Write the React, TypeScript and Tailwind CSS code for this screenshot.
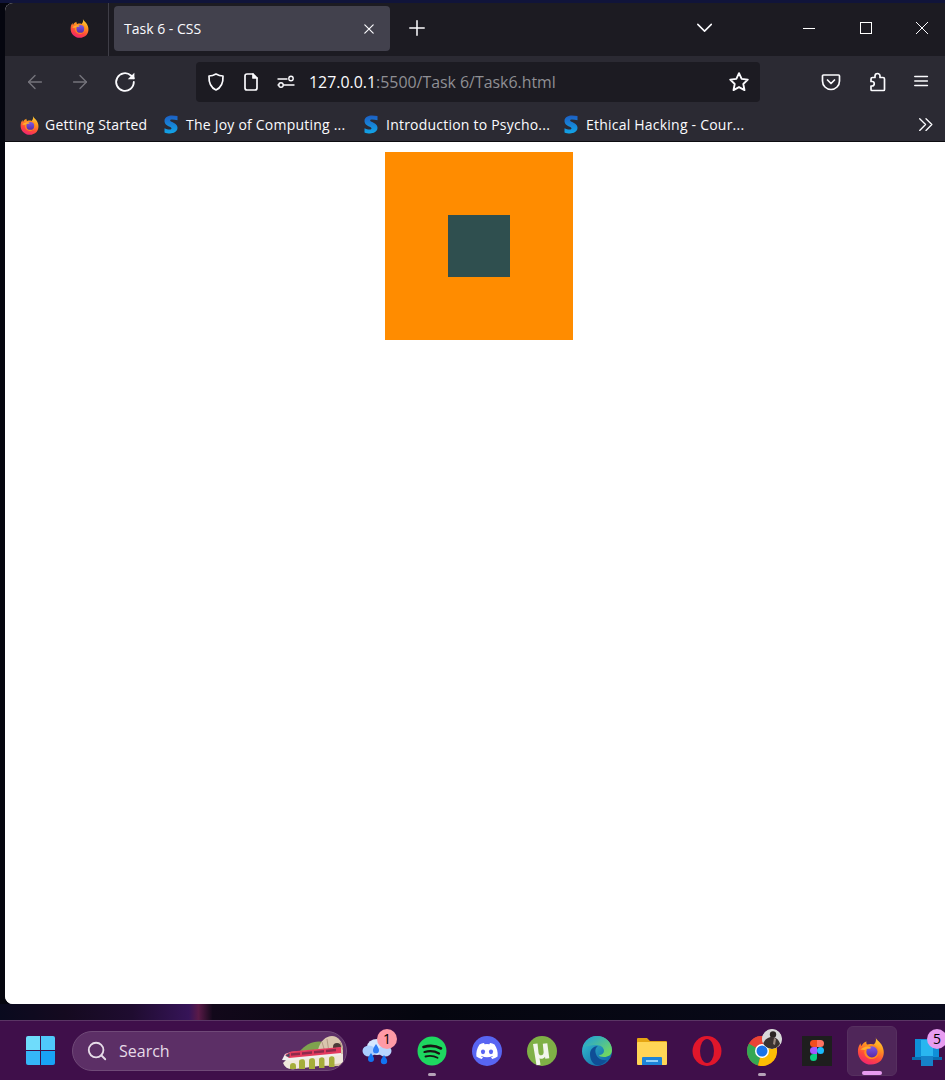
import { useId } from "react";
import { ArrowLeft, ArrowRight, Search } from "lucide-react";

function FirefoxLogo({ size = 20 }: { size?: number }) {
  const id = useId();
  return (
    <svg width={size} height={size} viewBox="0 0 32 32">
      <defs>
        <linearGradient id={`${id}b`} x1="0.75" y1="0" x2="0.35" y2="1">
          <stop offset="0" stopColor="#ffd23a" />
          <stop offset="0.35" stopColor="#ff9a1f" />
          <stop offset="0.7" stopColor="#ff4b3a" />
          <stop offset="1" stopColor="#f0246f" />
        </linearGradient>
        <linearGradient id={`${id}p`} x1="0.5" y1="0" x2="0.5" y2="1">
          <stop offset="0" stopColor="#7a5ae6" />
          <stop offset="1" stopColor="#5a2aa8" />
        </linearGradient>
      </defs>
      <path
        d="M20.500 1c.5 3 4.500 5 6.500 8.500 3.500 6 3.500 12.500-.5 17.500-3 3-7 4.500-11 4.500C8 31.500 1 25.500 1 17c0-3.500 1-6.500 3-9 0 1.500.3 2.500.8 3C6 8.500 8.500 6.500 10.500 6c-.5 1.500 0 3 1 3.500 2-1 5-1 7 0C21 7 21.500 4 20.500 1z"
        fill={`url(#${id}b)`}
      />
      <path d="M16 9.500c4.500 0 8 3.600 8 8.200S20.400 25.500 16 25.500s-8-3.500-8-7.800c0-1.800 1-3 2-4 1.500 1 4 1 5.500.3.800-.4.300-1.800-1.500-2 .6-1.500 1.300-2.500 2-2.500z" fill="#ff8a1f" />
      <circle cx="16.500" cy="17.500" r="6.200" fill={`url(#${id}p)`} />
      <path d="M3.500 15c2.500-1.800 5.500-3.500 8.500-3.300 1.500.1 3 .6 3.500 1.500-1.500 1-3.500 1-5 .8-.5 1-1.500 1.500-2.500 1.500-1.500 0-3-.3-4.500-.5z" fill="#ffb02e" />
    </svg>
  );
}

function SwayamLogo() {
  const id = useId();
  return (
    <svg width="14" height="19" viewBox="0 0 14 19">
      <defs>
        <linearGradient id={id} x1="0" y1="0" x2="0" y2="1">
          <stop offset="0" stopColor="#1c5fc4" />
          <stop offset="1" stopColor="#12a5e8" />
        </linearGradient>
      </defs>
      <path
        d="M13.500 1v4.200C11 4.500 8.500 4.200 7 4.500 5.500 4.900 6 6 7.500 6.800c3.500 1.600 6 3 6 6 0 4-4 5.700-7.500 5.700-2 0-4-.3-5.500-1v-4.300c2 1 4.500 1.500 6 1.200 1.500-.4 1.300-1.500-.2-2.300C3 10.500.5 9.200.5 6 .5 2 4.500.5 8 .5c2 0 4 .2 5.500.5z"
        fill={`url(#${id})`}
      />
    </svg>
  );
}

function Line({ children, size = 20 }: { children: React.ReactNode; size?: number }) {
  return (
    <svg
      width={size}
      height={size}
      viewBox="0 0 20 20"
      fill="none"
      stroke="currentColor"
      strokeWidth="1.700"
      strokeLinecap="round"
      strokeLinejoin="round"
    >
      {children}
    </svg>
  );
}

function Bookmark({ icon, label, width }: { icon: React.ReactNode; label: string; width: string }) {
  return (
    <div className={`flex shrink-0 items-center gap-[5px] ${width}`}>
      <div className="flex w-[20px] justify-center">{icon}</div>
      <span className="whitespace-nowrap tracking-[0.22px]">{label}</span>
    </div>
  );
}

function TabBar() {
  return (
    <div className="flex h-[53px] shrink-0 bg-[#1c1b22] text-[#fbfbfe]">
      <div className="flex h-full w-[104px] shrink-0 items-center justify-end border-r border-[#3f3e47] pr-[18px] pb-[3px]">
        <FirefoxLogo size={20} />
      </div>
      <div className="ml-[5px] mt-[3px] flex h-[45px] w-[276px] items-center justify-between rounded-[4px] bg-[#42414d] pl-[10px] pr-[14px] text-[14px]">
        <span>Task 6 - CSS</span>
        <Line size={14}>
          <path d="M4 4l12 12M16 4L4 16" />
        </Line>
      </div>
      <div className="ml-[18px] flex h-full items-center pb-[3px]">
        <Line size={18}>
          <path d="M10 2v16M2 10h16" />
        </Line>
      </div>
      <div className="ml-[270px] flex h-full items-center pb-[3px]">
        <Line size={18}>
          <path d="M2 6l7.500 7.500L17 6" />
        </Line>
      </div>
      <div className="ml-[89px] flex h-full items-center pb-[3px]">
        <div className="h-px w-[12px] bg-white" />
      </div>
      <div className="ml-[45px] flex h-full items-center pb-[3px]">
        <div className="size-[12px] border border-white" />
      </div>
      <div className="ml-[43px] flex h-full items-center pb-[3px]">
        <svg width="14" height="14" viewBox="0 0 14 14" stroke="currentColor" strokeWidth="1">
          <path d="M1 1l12 12M13 1L1 13" />
        </svg>
      </div>
    </div>
  );
}

function Toolbar() {
  return (
    <div className="flex h-[52px] shrink-0 items-center bg-[#2b2a33] text-[#fbfbfe]">
      <div className="ml-[19px] flex w-[172px] shrink-0 items-center gap-[23px]">
        <ArrowLeft size={22} strokeWidth={1.500} className="text-[#75747c]" />
        <ArrowRight size={22} strokeWidth={1.500} className="text-[#75747c]" />
        <Line size={22}>
          <path d="M18 10a8 8 0 1 1-2.600-5.900L18 6.500" />
          <path d="M18.500 1.500V7.500h-6z" fill="currentColor" stroke="none" />
        </Line>
      </div>
      <div className="flex h-[40px] w-[564px] shrink-0 items-center rounded-[4px] bg-[#1c1b22] pl-[10px] pr-[10px]">
        <Line size={20}>
          <path d="M10 2c2.500 1.500 4.800 2 7 2 .3 6.500-1.500 11.500-7 14C4.500 15.500 2.700 10.500 3 4c2.200 0 4.500-.5 7-2z" />
        </Line>
        <div className="ml-[15px]">
          <Line size={20}>
            <path d="M4 4a2 2 0 0 1 2-2h6l4 4v10a2 2 0 0 1-2 2H6a2 2 0 0 1-2-2z" />
            <path d="M12 2v4h4" fill="currentColor" />
          </Line>
        </div>
        <div className="ml-[15px]">
          <Line size={20}>
            <path d="M2 7h9M2 13h16" strokeWidth="1.400" />
            <circle cx="15" cy="6.500" r="2.200" strokeWidth="1.400" />
            <circle cx="5" cy="13" r="2.200" strokeWidth="1.400" fill="#1c1b22" />
          </Line>
        </div>
        <span className="ml-[13px] mt-[2px] whitespace-nowrap text-[15.900px] text-[#fbfbfe]">
          127.0.0.1<span className="text-[#8f8f94]">:5500/Task 6/Task6.html</span>
        </span>
        <div className="ml-auto">
          <Line size={22}>
            <path d="M10 2l2.400 5.200 5.600.7-4.100 3.900 1.100 5.600-5-2.800-5 2.800 1.100-5.600L2 7.900l5.600-.7z" />
          </Line>
        </div>
      </div>
      <div className="ml-[61px] flex items-center gap-[26px]">
        <Line size={20}>
          <path d="M2.500 3h15a1 1 0 0 1 1 1v5a8.500 8.500 0 0 1-17 0V4a1 1 0 0 1 1-1z" />
          <path d="M6.500 8l3.500 3.500L13.500 8" />
        </Line>
        <Line size={20}>
          <path d="M8 4.500V4a2.500 2.500 0 0 1 5 0v1.500h3a1.500 1.500 0 0 1 1.500 1.500v10.500a1 1 0 0 1-1 1H5a1 1 0 0 1-1-1v-3.500h1a2 2 0 0 0 0-4.500H4V7a1.500 1.500 0 0 1 1.500-1.500H8z" />
        </Line>
        <Line size={18}>
          <path d="M2 4h14M2 9h14M2 14h14" />
        </Line>
      </div>
    </div>
  );
}

function BookmarksBar() {
  return (
    <div className="flex h-[34px] shrink-0 items-center border-b border-[#0c0c10] bg-[#2b2a33] pl-[15px] text-[14px] text-[#fbfbfe]">
      <Bookmark icon={<FirefoxLogo size={20} />} label="Getting Started" width="w-[141px]" />
      <Bookmark icon={<SwayamLogo />} label="The Joy of Computing ..." width="w-[200px]" />
      <Bookmark icon={<SwayamLogo />} label="Introduction to Psycho..." width="w-[200px]" />
      <Bookmark icon={<SwayamLogo />} label="Ethical Hacking - Cour..." width="w-[356px]" />
      <Line size={18}>
        <path d="M3 3l6.500 6.500L3 16M10 3l6.500 6.500L10 16" strokeWidth="1.500" />
      </Line>
    </div>
  );
}

function TrainScene() {
  return (
    <svg width="62" height="34" viewBox="0 0 62 34">
      <path d="M18 16C25 8 33 4 43 6v12z" fill="#7ea34e" />
      <path d="M37 20V14C39 5 45 0 51 0c6 0 10.500 6 11 12v18H37z" fill="#d9c6ae" />
      <path d="M41 6l3 10M46 3l1.500 10M62 14l-3-8" stroke="#b39c84" strokeWidth="1" fill="none" />
      <path d="M52 15v-4a4 4 0 0 1 8 0v3z" fill="#4b3a38" />
      <path d="M2 27l4-4 56-5v9L14 33c-6 1-10-1-12-6z" fill="#f0e8dc" />
      <path d="M9 33V30a3 3 0 0 1 6 0v3zM18 33v-7a3 3 0 0 1 6 0v7zM28 33v-8a3 3 0 0 1 6 0v8zM38 32v-8a2.700 2.700 0 0 1 5.500 0v8zM48 31v-8a2.700 2.700 0 0 1 5.500 0v8z" fill="#a5ad3a" />
      <path d="M1 24l3-6 6-2 50-4.500V19L9 24.500z" fill="#f0f0ee" />
      <path d="M4 19l6-3.500 50-4.500v6L8 22z" fill="#e43a5e" />
      <path d="M10 17.300l9-.9v2.500l-9 .9zM21 16.200l10-1v2.500l-10 1zM33 15l10-1v2.500l-10 1zM45 13.800l10-1v2.500l-10 1z" fill="#8e2a4c" />
      <path d="M4.500 20l4-3v4z" fill="#3f4a66" />
    </svg>
  );
}

function WeatherIcon() {
  return (
    <svg width="30" height="30" viewBox="0 0 30 30">
      <ellipse cx="15" cy="11" rx="10" ry="8" fill="#d6e8ff" />
      <ellipse cx="7" cy="15" rx="6.500" ry="5.500" fill="#a9ceff" />
      <ellipse cx="23" cy="15" rx="6.500" ry="5.500" fill="#b7d6ff" />
      <path d="M14 8c2 3 3 4.500 3 6.500a3 3 0 0 1-6 0c0-2 1-3.500 3-6.500z" fill="#2f7df6" />
      <path d="M9 17c1.500 2.500 3 4 3 6a3 3 0 0 1-6 0c0-2 1.500-3.500 3-6z" fill="#1274f2" />
      <path d="M22 19c1.500 2.500 3.200 4 3.200 6a3.200 3.200 0 0 1-6.400 0c0-2 1.700-3.500 3.200-6z" fill="#1274f2" />
    </svg>
  );
}

function SpotifyIcon() {
  return (
    <svg width="30" height="30" viewBox="0 0 30 30">
      <circle cx="15" cy="15" r="14.500" fill="#1ed760" />
      <g fill="none" stroke="#191414" strokeLinecap="round">
        <path d="M6.500 11c6-1.700 12.500-1.200 17.500 1.500" strokeWidth="2.600" />
        <path d="M7.500 16c5-1.300 10.500-.8 14.500 1.500" strokeWidth="2.200" />
        <path d="M8.500 20.500c4.200-1 8.500-.6 12 1.300" strokeWidth="1.800" />
      </g>
    </svg>
  );
}

function DiscordIcon() {
  return (
    <svg width="30" height="30" viewBox="0 0 30 30">
      <circle cx="15" cy="15" r="15" fill="#5865f2" />
      <path
        d="M22.500 8.500a17 17 0 0 0-4.500-1.400l-.6 1.200a15 15 0 0 0-4.800 0L12 7.100a17 17 0 0 0-4.500 1.400C4.800 12.500 4 16.500 4.400 20.400a17 17 0 0 0 5.400 2.700l1.200-1.800-1.900-.9.400-.4c3.700 1.700 7.300 1.700 11 0l.4.400-1.900.9 1.200 1.800a17 17 0 0 0 5.400-2.700c.5-4.500-.7-8.500-3.100-11.900z"
        fill="#fff"
      />
      <ellipse cx="11" cy="15.800" rx="2.100" ry="2.400" fill="#5865f2" />
      <ellipse cx="19" cy="15.800" rx="2.100" ry="2.400" fill="#5865f2" />
    </svg>
  );
}

function UTorrentIcon() {
  return (
    <svg width="30" height="30" viewBox="0 0 30 30">
      <circle cx="15" cy="15" r="15" fill="#7fb046" />
      <path d="M6 8l4.500-.5 1 9c.2 2 1.200 3 2.700 2.800 1.800-.2 2.600-1.500 2.400-3.500l-.8-8 4.500-.5 2 15-4 .5-.3-2c-1.500 2-3.500 2.500-5.500 1.500l1 6.500-4 .5z" fill="#f2f5ec" />
    </svg>
  );
}

function EdgeIcon() {
  return (
    <svg width="30" height="30" viewBox="0 0 30 30">
      <defs>
        <linearGradient id="edgeA" x1="0" y1="0" x2="1" y2="1">
          <stop offset="0" stopColor="#37c6d0" />
          <stop offset="1" stopColor="#0c59a4" />
        </linearGradient>
        <linearGradient id="edgeB" x1="0" y1="0" x2="1" y2="1">
          <stop offset="0" stopColor="#1b9de2" />
          <stop offset="1" stopColor="#7ee04f" />
        </linearGradient>
      </defs>
      <circle cx="15" cy="15" r="15" fill="url(#edgeA)" />
      <path d="M1 11C3 4 9 0 15 0c8 0 15 6 15 14 0 5-4 7-8 7-3 0-5-1-5-2 3 0 5-2 5-4 0-4-4-6-8-6-5 0-9 1-13 2z" fill="url(#edgeB)" />
      <path d="M8 18c0-5 4-8 8-8-3 2-3 5-2 8 1 4 6 7 11 6-3 4-7 6-11 5-4-2-6-6-6-11z" fill="#0f4e96" />
    </svg>
  );
}

function FolderIcon() {
  return (
    <svg width="30" height="28" viewBox="0 0 30 28">
      <path d="M0 2a1 1 0 0 1 1-1h9l3 3h16a1 1 0 0 1 1 1v3H0z" fill="#e6a512" />
      <rect y="5" width="30" height="23" rx="1" fill="#ffd556" />
      <path d="M5 21a1 1 0 0 1 1-1h18a1 1 0 0 1 1 1v7H5z" fill="#1c84d8" />
      <rect x="9" y="23" width="12" height="2" fill="#8fd0f7" />
    </svg>
  );
}

function OperaIcon() {
  return (
    <svg width="30" height="30" viewBox="0 0 30 30">
      <ellipse cx="15" cy="15" rx="14.500" ry="15" fill="#e0162b" />
      <ellipse cx="15" cy="15" rx="7" ry="12" fill="#3f0f4a" />
    </svg>
  );
}

function ChromeIcon() {
  return (
    <svg width="30" height="30" viewBox="0 0 30 30">
      <circle cx="15" cy="15" r="15" fill="#ea4335" />
      <path d="M15 15L2 7.500A15 15 0 0 0 11 29.500z" fill="#34a853" />
      <path d="M15 15l-4 14.500A15 15 0 0 0 28 7.500z" fill="#fbbc04" />
      <path d="M15 15L28 7.500A15 15 0 0 0 2 7.500z" fill="#ea4335" />
      <circle cx="15" cy="15" r="7" fill="#fff" />
      <circle cx="15" cy="15" r="5.500" fill="#1a73e8" />
    </svg>
  );
}

function ProfileBadge() {
  return (
    <svg width="20" height="20" viewBox="0 0 20 20">
      <circle cx="10" cy="10" r="10" fill="#d8d8d8" />
      <circle cx="11" cy="5.500" r="3.200" fill="#2b2624" />
      <path d="M1 15c2-5 5-7 9-7 4 0 7 3 8 7-2 3-5 5-8 5s-7-2-9-5z" fill="#3a3230" />
      <path d="M12 9l2 1-1 6-2-1z" fill="#9a8a80" />
    </svg>
  );
}

function FigmaIcon() {
  return (
    <svg width="30" height="30" viewBox="0 0 30 30">
      <rect width="30" height="30" fill="#1e1e1e" />
      <path d="M8 7.500A3.500 3.500 0 0 1 11.500 4H15v7h-3.500A3.500 3.500 0 0 1 8 7.500z" fill="#f24e1e" />
      <path d="M15 4h3.500a3.500 3.500 0 0 1 0 7H15z" fill="#ff7262" />
      <path d="M8 14.500A3.500 3.500 0 0 1 11.500 11H15v7h-3.500A3.500 3.500 0 0 1 8 14.500z" fill="#a259ff" />
      <circle cx="18.500" cy="14.500" r="3.500" fill="#1abcfe" />
      <path d="M8 21.500a3.500 3.500 0 0 1 3.500-3.500H15v3.500a3.500 3.500 0 0 1-7 0z" fill="#0acf83" />
    </svg>
  );
}

function StoreIcon() {
  return (
    <svg width="30" height="30" viewBox="0 0 30 30">
      <rect x="3" y="3" width="24" height="20" fill="#0f8fd8" />
      <rect x="0" y="21" width="30" height="3" fill="#0a6cb0" />
      <rect x="9" y="4" width="12" height="26" fill="#29b6f0" />
      <rect x="9" y="20" width="12" height="10" fill="#1682c9" />
    </svg>
  );
}

function TaskbarIcon({
  children,
  badge,
  badgeClass,
  indicator,
}: {
  children: React.ReactNode;
  badge?: React.ReactNode;
  badgeClass?: string;
  indicator?: boolean;
}) {
  return (
    <div className="relative flex h-[50px] w-[55px] shrink-0 items-center justify-center">
      {children}
      {badge && (
        <div
          className={`absolute right-[7px] top-[3px] flex size-[20px] items-center justify-center overflow-hidden rounded-full text-[14px] text-black ${badgeClass}`}
        >
          {badge}
        </div>
      )}
      {indicator && (
        <div className="absolute bottom-0 left-1/2 h-[3px] w-[8px] -translate-x-1/2 rounded-full bg-[#b5a2b8]" />
      )}
    </div>
  );
}

function Taskbar() {
  return (
    <div className="flex h-[60px] shrink-0 items-center border-t border-[#5a3564] bg-[#3f0f4a] pl-[26px]">
      <div className="grid size-[29px] shrink-0 grid-cols-2 gap-px">
        <div className="rounded-tl-[2px] bg-[#6fdcfb]" />
        <div className="rounded-tr-[2px] bg-[#4fc8fb]" />
        <div className="rounded-bl-[2px] bg-[#35b6f8]" />
        <div className="rounded-br-[2px] bg-[#18a2f6]" />
      </div>
      <div className="ml-[17px] flex h-[40px] w-[275px] shrink-0 items-center justify-between overflow-hidden rounded-full border border-[#704a78] bg-[#5c2f66] pl-[13px] pr-[3px] text-[#e6dbe8]">
        <div className="flex items-center gap-[11px]">
          <Search size={22} strokeWidth={2} />
          <span className="text-[16px]">Search</span>
        </div>
        <div className="self-end">
          <TrainScene />
        </div>
      </div>
      <div className="ml-[2px] flex items-center">
        <TaskbarIcon badge="1" badgeClass="bg-[#ff9aa6]">
          <WeatherIcon />
        </TaskbarIcon>
        <TaskbarIcon indicator>
          <SpotifyIcon />
        </TaskbarIcon>
        <TaskbarIcon>
          <DiscordIcon />
        </TaskbarIcon>
        <TaskbarIcon>
          <UTorrentIcon />
        </TaskbarIcon>
        <TaskbarIcon>
          <EdgeIcon />
        </TaskbarIcon>
        <TaskbarIcon>
          <FolderIcon />
        </TaskbarIcon>
        <TaskbarIcon>
          <OperaIcon />
        </TaskbarIcon>
        <TaskbarIcon indicator badge={<ProfileBadge />} badgeClass="bg-[#ccc]">
          <ChromeIcon />
        </TaskbarIcon>
        <TaskbarIcon>
          <FigmaIcon />
        </TaskbarIcon>
        <div className="relative mx-[2.500px] flex h-[50px] w-[50px] shrink-0 items-center justify-center rounded-[6px] border border-[#56305f] bg-[#4f2659]">
          <FirefoxLogo size={29} />
          <div className="absolute bottom-0 left-1/2 h-[4px] w-[20px] -translate-x-1/2 rounded-full bg-[#e79cf0]" />
        </div>
        <TaskbarIcon badge="5" badgeClass="bg-[#e79cf0]">
          <StoreIcon />
        </TaskbarIcon>
      </div>
    </div>
  );
}

export default function App() {
  return (
    <div className="flex h-[1080px] w-[945px] flex-col overflow-hidden bg-[#05060f] font-['Open_Sans','Noto_Sans',sans-serif]">
      <div className="h-[3px] shrink-0 bg-[#10143a]" />
      <div className="ml-[5px] flex h-[1001px] w-[948px] shrink-0 flex-col overflow-hidden rounded-[8px] bg-white">
        <TabBar />
        <Toolbar />
        <BookmarksBar />
        <div className="flex-1 bg-white pt-[10px]">
          <div className="mx-auto flex size-[188px] items-center justify-center bg-[#ff8c00]">
            <div className="size-[62px] bg-[#2f4f4f]" />
          </div>
        </div>
      </div>
      <div className="flex-1 bg-[linear-gradient(90deg,#090a1e_0%,#150a20_7%,#1f0c30_14%,#361458_20%,#5a1a48_21%,#12081a_22.500%,#05060f_45%,#0a0a1c_100%)]" />
      <Taskbar />
    </div>
  );
}
